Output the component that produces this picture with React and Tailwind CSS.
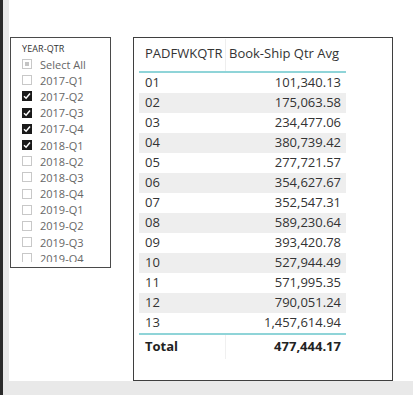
import React from "react";

const items = [
  { label: "Select All", state: "partial" },
  { label: "2017-Q1", state: "off" },
  { label: "2017-Q2", state: "on" },
  { label: "2017-Q3", state: "on" },
  { label: "2017-Q4", state: "on" },
  { label: "2018-Q1", state: "on" },
  { label: "2018-Q2", state: "off" },
  { label: "2018-Q3", state: "off" },
  { label: "2018-Q4", state: "off" },
  { label: "2019-Q1", state: "off" },
  { label: "2019-Q2", state: "off" },
  { label: "2019-Q3", state: "off" },
  { label: "2019-Q4", state: "off" },
];

const rows = [
  ["01", "101,340.13"],
  ["02", "175,063.58"],
  ["03", "234,477.06"],
  ["04", "380,739.42"],
  ["05", "277,721.57"],
  ["06", "354,627.67"],
  ["07", "352,547.31"],
  ["08", "589,230.64"],
  ["09", "393,420.78"],
  ["10", "527,944.49"],
  ["11", "571,995.35"],
  ["12", "790,051.24"],
  ["13", "1,457,614.94"],
];

function Box({ state }) {
  if (state === "on") {
    return (
      <div className="w-[10px] h-[10px] bg-[#1a1a1a] flex items-center justify-center shrink-0">
        <svg width="8" height="8" viewBox="0 0 8 8">
          <path d="M1 4.2 L3.1 6.2 L7 1.6" stroke="white" strokeWidth="1.5" fill="none" />
        </svg>
      </div>
    );
  }
  if (state === "partial") {
    return (
      <div className="w-[10px] h-[10px] border border-[#c8c8c8] flex items-center justify-center shrink-0">
        <div className="w-[4px] h-[4px] bg-[#c4c4c4]" />
      </div>
    );
  }
  return <div className="w-[10px] h-[10px] border border-[#c8c8c8] shrink-0" />;
}

export default function App() {
  return (
    <div
      className="w-[413px] h-[395px] flex overflow-hidden bg-white"
      style={{ fontFamily: '"Open Sans", "Noto Sans", sans-serif' }}
    >
      <div className="w-[3px] h-full bg-[#2a2a2a]" />
      <div className="w-[6px] h-full bg-[#e8e8e8]" />
      <div className="flex-1 flex flex-col">
        <div className="h-[381px] bg-white flex items-start pt-[37px] pl-[1px]">
          {/* Slicer */}
          <div className="w-[101px] h-[231px] border border-[#4a4a4a] overflow-hidden pl-[11px] pt-[5px]">
            <div className="text-[9px] leading-[12px] text-[#333] tracking-[0.1px]">YEAR-QTR</div>
            <div className="flex flex-col mt-[1px] h-[206px] overflow-hidden">
              {items.map((it) => (
                <div key={it.label} className="h-[16.2px] shrink-0 flex items-center gap-[8px]">
                  <Box state={it.state} />
                  <span className="text-[11px] text-[#666] leading-none">{it.label}</span>
                </div>
              ))}
            </div>
          </div>
          {/* Table */}
          <div className="ml-[22px] w-[260px] h-[344px] border border-[#3f3f3f] pl-[5px] pt-[1px]">
            <div className="w-[207px] text-[13px] text-[#333]">
              <div className="flex h-[34px] border-b-2 border-[#8fd4d8]">
                <div className="w-[87px] pl-[6px] pt-[5px] border-r border-[#eeeeee]">PADFWKQTR</div>
                <div className="flex-1 pl-[3px] pt-[5px] whitespace-nowrap">Book-Ship Qtr Avg</div>
              </div>
              {rows.map(([k, v], i) => (
                <div
                  key={k}
                  className={`flex h-[20px] items-center ${i % 2 === 1 ? "bg-[#eeeeee]" : "bg-white"}`}
                >
                  <div className="w-[87px] pl-[6px]">{k}</div>
                  <div className="flex-1 text-right pr-[5px]">{v}</div>
                </div>
              ))}
              <div className="flex h-[26px] items-center border-t-2 border-[#8fd4d8] font-bold text-[#222]">
                <div className="w-[87px] pl-[6px] border-r border-[#f0f0f0] h-full flex items-center">Total</div>
                <div className="flex-1 text-right pr-[5px]">477,444.17</div>
              </div>
            </div>
          </div>
        </div>
        <div className="flex-1 bg-[#e9e9e9]" />
      </div>
    </div>
  );
}
